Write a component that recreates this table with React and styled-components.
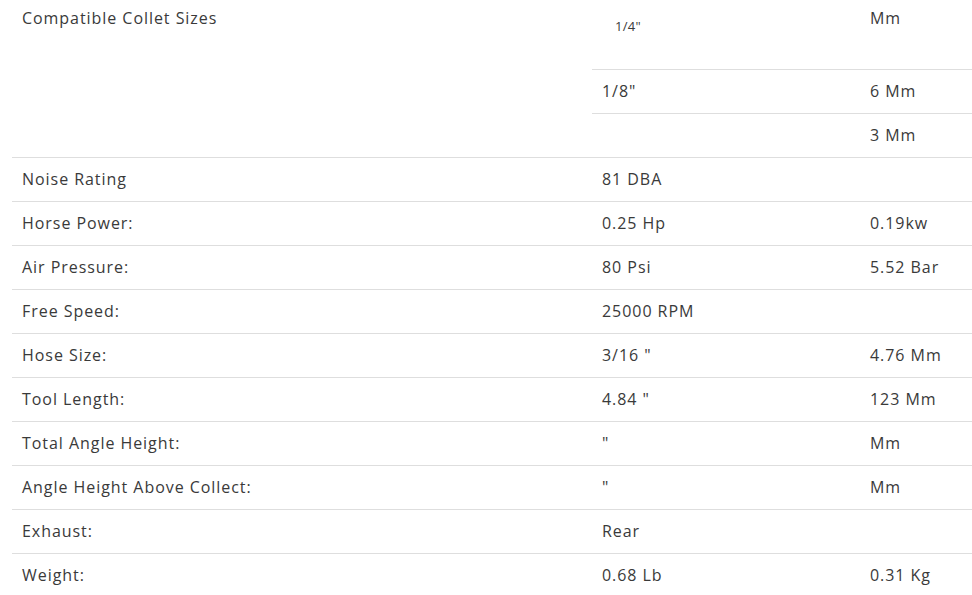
import React from 'react'
import styled, { createGlobalStyle } from 'styled-components'

const GlobalStyle = createGlobalStyle`
  html, body {
    margin: 0;
    padding: 0;
    background: #fff;
  }
  body {
    font-family: 'Open Sans', 'Noto Sans', sans-serif;
    color: #3a3a3a;
  }
`

const specs = [
  { label: 'Noise Rating', a: '81 DBA', b: '' },
  { label: 'Horse Power:', a: '0.25 Hp', b: '0.19kw' },
  { label: 'Air Pressure:', a: '80 Psi', b: '5.52 Bar' },
  { label: 'Free Speed:', a: '25000 RPM', b: '' },
  { label: 'Hose Size:', a: '3/16 "', b: '4.76 Mm' },
  { label: 'Tool Length:', a: '4.84 "', b: '123 Mm' },
  { label: 'Total Angle Height:', a: '"', b: 'Mm' },
  { label: 'Angle Height Above Collect:', a: '"', b: 'Mm' },
  { label: 'Exhaust:', a: 'Rear', b: '' },
  { label: 'Weight:', a: '0.68 Lb', b: '0.31 Kg' },
]

export default function App() {
  return (
    <>
      <GlobalStyle />
      <Table>
        <Cell $top $span={3}>Compatible Collet Sizes</Cell>
        <Cell $top>
          <Nested>1/4"</Nested>
        </Cell>
        <Cell $top>Mm</Cell>
        <Cell>1/8"</Cell>
        <Cell>6 Mm</Cell>
        <Cell></Cell>
        <Cell>3 Mm</Cell>
        {specs.map((s) => (
          <React.Fragment key={s.label}>
            <Cell>{s.label}</Cell>
            <Cell>{s.a}</Cell>
            <Cell>{s.b}</Cell>
          </React.Fragment>
        ))}
      </Table>
    </>
  )
}

const Table = styled.div`
  display: grid;
  grid-template-columns: 580px 268px 1fr;
  margin-left: 12px;
`

const Cell = styled.div`
  grid-row: ${(p) => (p.$span ? `span ${p.$span}` : 'auto')};
  padding: ${(p) => (p.$top ? '8px' : '11px')} 10px 12px 10px;
  border-bottom: 1px solid #dedede;
  font-size: 16px;
  line-height: 20px;
  letter-spacing: 0.95px;
  min-height: 20px;
`

const Nested = styled.div`
  padding: 9px 0 22px 13px;
  font-size: 13px;
  line-height: 18px;
  letter-spacing: 0.3px;
`
